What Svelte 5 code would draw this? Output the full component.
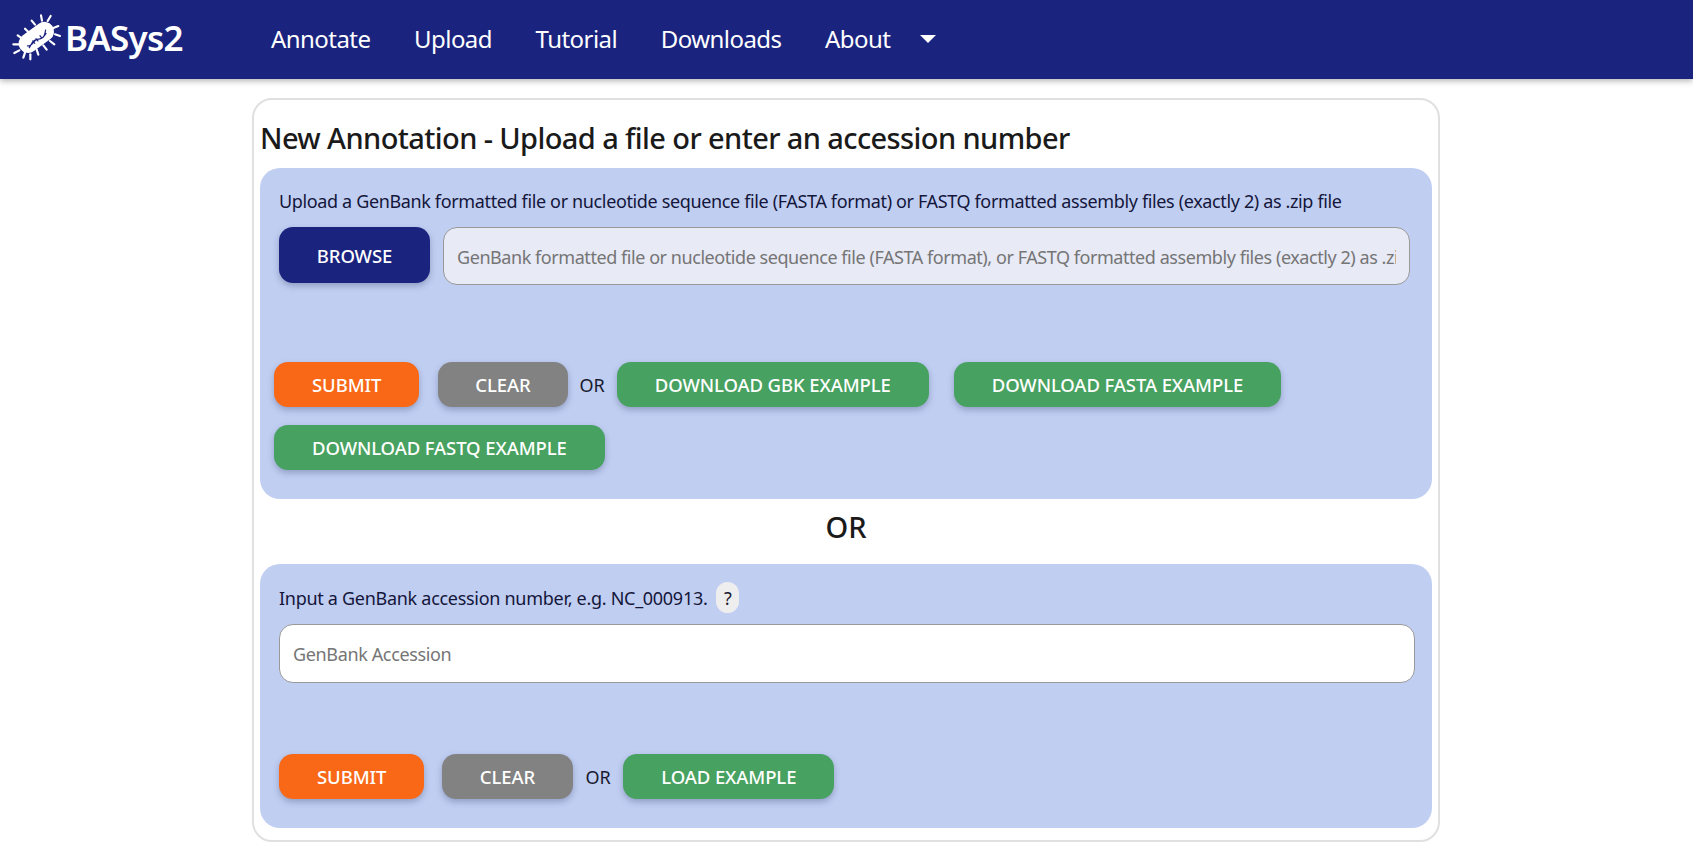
<script>
  const rays = [
    [108,28,111,44],[137,30,128,45],[80,44,90,56],[160,60,145,66],[60,68,71,79],[165,90,150,85],[38,88,52,98],
    [148,115,135,105],[25,115,42,115],[125,131,115,118],[28,141,43,133],[100,146,95,131],[55,155,60,140],[76,160,76,145]
  ];
  const navItems = ['Annotate', 'Upload', 'Tutorial', 'Downloads', 'About'];
</script>

<header class="bar">
  <div class="brand">
    <svg class="logo" viewBox="0 0 195 195" width="65" height="65" aria-hidden="true">
      {#each rays as r}
        <line x1={r[0]} y1={r[1]} x2={r[2]} y2={r[3]} stroke="#fff" stroke-width="6.5" stroke-linecap="round" />
      {/each}
      <rect x="35" y="65" width="118" height="58" rx="29" fill="#fff" transform="rotate(-36 94 94)" />
      <path d="M66 119c12 6 20-14 28-18s16 4 30-20M72 126c8-8 6-20 22-25s24 0 28-30M82 104l8 9M92 97l8 9M104 88l7 9" stroke="#1a237e" stroke-width="3.6" fill="none" />
    </svg>
    <span class="name">BASys2</span>
  </div>
  <nav class="nav">
    {#each navItems as item}
      <span class="nav-item">{item}</span>
    {/each}
    <span class="caret"></span>
  </nav>
</header>

<main class="main">
  <section class="card">
    <h1>New Annotation - Upload a file or enter an accession number</h1>

    <div class="panel first">
      <p class="label">Upload a GenBank formatted file or nucleotide sequence file (FASTA format) or FASTQ formatted assembly files (exactly 2) as .zip file</p>
      <div class="file-row">
        <button class="btn navy browse">BROWSE</button>
        <input class="field tinted" placeholder="GenBank formatted file or nucleotide sequence file (FASTA format), or FASTQ formatted assembly files (exactly 2) as .zip file" />
      </div>
      <div class="actions upper">
        <button class="btn orange">SUBMIT</button>
        <button class="btn grey">CLEAR</button>
        <span class="or">OR</span>
        <button class="btn green spaced">DOWNLOAD GBK EXAMPLE</button>
        <button class="btn green">DOWNLOAD FASTA EXAMPLE</button>
        <button class="btn green">DOWNLOAD FASTQ EXAMPLE</button>
      </div>
    </div>

    <h2>OR</h2>

    <div class="panel second">
      <div class="label-row">
        <span class="label">Input a GenBank accession number, e.g. NC_000913.</span>
        <span class="help">?</span>
      </div>
      <input class="field plain" placeholder="GenBank Accession" />
      <div class="actions lower">
        <button class="btn orange">SUBMIT</button>
        <button class="btn grey">CLEAR</button>
        <span class="or">OR</span>
        <button class="btn green">LOAD EXAMPLE</button>
      </div>
    </div>
  </section>
</main>

<style>
  :global(body) {
    margin: 0;
    background: #fff;
    color: #1a1a2e;
    font-family: "Noto Sans", "Open Sans", sans-serif;
    overflow: hidden;
  }
  .bar {
    height: 79px;
    background: #1a237e;
    color: #fff;
    display: flex;
    align-items: center;
    box-shadow: 0 2px 6px rgba(0, 0, 0, 0.3);
    position: relative;
  }
  .brand {
    width: 271px;
    display: flex;
    align-items: center;
    padding-left: 5px;
    box-sizing: border-box;
    margin-top: -4px;
  }
  .logo {
    flex: none;
    margin-top: 2px;
  }
  .name {
    font-size: 35px;
    font-weight: 600;
    letter-spacing: -0.75px;
    margin-left: -5px;
  }
  .nav {
    display: flex;
    align-items: center;
    gap: 43.6px;
    font-size: 24px;
    letter-spacing: -0.55px;
    margin-top: -3px;
  }
  .caret {
    width: 0;
    height: 0;
    border-left: 8px solid transparent;
    border-right: 8px solid transparent;
    border-top: 8px solid #fff;
    margin-left: -14px;
    margin-top: 2px;
  }
  .main {
    display: flex;
    justify-content: flex-start;
    padding: 19px 0 0 252px;
  }
  .card {
    width: 1188px;
    height: 744px;
    box-sizing: border-box;
    border: 2px solid #e0e0e0;
    border-radius: 20px;
    padding: 0 6px;
    flex: none;
  }
  h1 {
    margin: 19px 0 0;
    font-size: 29px;
    line-height: 38px;
    font-weight: 500;
    letter-spacing: -0.6px;
    color: #1a1a1a;
    height: 49px;
  }
  h2 {
    margin: 0;
    text-align: center;
    font-size: 29px;
    font-weight: 500;
    line-height: 55px;
    padding-bottom: 10px;
    color: #1a1a1a;
  }
  .panel {
    background: #c0cef2;
    border-radius: 20px;
    box-sizing: border-box;
    width: 1172px;
  }
  .first {
    height: 331px;
    padding: 21px 19px 0 14px;
  }
  .second {
    height: 264px;
    padding: 18px 17px 0 19px;
  }
  .label {
    font-size: 18px;
    line-height: 24px;
    letter-spacing: -0.36px;
    margin: 0 0 0 5px;
    color: #14163a;
  }
  .second .label {
    margin: 0;
    letter-spacing: -0.29px;
  }
  .file-row {
    display: flex;
    gap: 13px;
    margin: 14px 0 0 5px;
  }
  .btn {
    border: none;
    border-radius: 14px;
    color: #fff;
    font: 500 18.5px "Noto Sans", sans-serif;
    letter-spacing: -0.1px;
    height: 45px;
    padding: 0 38px;
    box-shadow: 0 3px 6px rgba(40, 50, 90, 0.3);
    white-space: nowrap;
  }
  .navy {
    background: #1a237e;
  }
  .browse {
    width: 151px;
    height: 56px;
    padding: 0;
    flex: none;
  }
  .orange {
    background: #f86817;
  }
  .grey {
    background: #828282;
    padding: 0 37px;
  }
  .lower .grey {
    padding: 0 38px;
  }
  .green {
    background: #47a160;
  }
  .field {
    box-sizing: border-box;
    border: 1px solid #999;
    border-radius: 14px;
    padding: 0 13px;
    font: 18px "Noto Sans", sans-serif;
    outline: none;
  }
  .field::placeholder {
    color: #757575;
    opacity: 1;
  }
  .tinted {
    background: #e8eaf6;
    width: 967px;
    height: 58px;
    flex: none;
    letter-spacing: -0.44px;
    padding-top: 2px;
  }
  .plain {
    background: #fff;
    width: 1136px;
    height: 59px;
    display: block;
    margin-top: 11px;
    letter-spacing: -0.36px;
  }
  .actions {
    display: flex;
    flex-wrap: wrap;
    align-items: center;
  }
  .upper {
    margin-top: 77px;
    row-gap: 18px;
    column-gap: 19px;
  }
  .upper .or {
    margin: 0 -7px;
  }
  .spaced {
    margin-right: 6px;
  }
  .lower {
    margin-top: 71px;
    column-gap: 17.5px;
  }
  .lower .or {
    margin: 0 -5px;
  }
  .or {
    font-size: 18px;
  }
  .label-row {
    display: flex;
    align-items: center;
    gap: 9px;
    height: 31px;
  }
  .help {
    width: 23px;
    height: 31px;
    background: #eee;
    border-radius: 12px;
    display: flex;
    align-items: center;
    justify-content: center;
    font-size: 18px;
  }
</style>
